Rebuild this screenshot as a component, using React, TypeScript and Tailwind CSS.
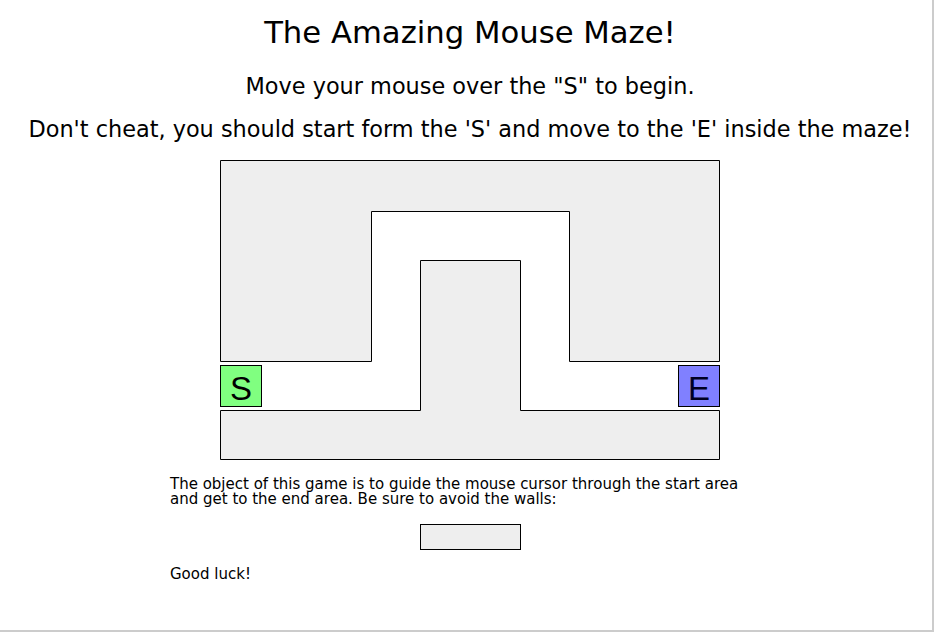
export default function App() {
  return (
    <div className="w-[935px] h-[633px] bg-white overflow-hidden">
      <div className="w-[934px] h-[632px] border-r-2 border-b-2 border-[#cccccc] overflow-hidden">
        <div className="w-[940px] flex flex-col items-center text-black font-['DejaVu_Sans',sans-serif]">
          <h1 className="mt-[13px] text-[30.7px] leading-[40px] font-normal">The Amazing Mouse Maze!</h1>
          <p className="mt-[18px] text-[22.4px] leading-[30px]">Move your mouse over the "S" to begin.</p>
          <p className="mt-[13px] text-[22.4px] leading-[30px]">
            Don't cheat, you should start form the 'S' and move to the 'E' inside the maze!
          </p>

          <div className="relative mt-[16px] w-[500px] h-[300px]">
            <svg width="500" height="300" viewBox="0 0 500 300" className="block">
              <polygon
                points="0.5,0.5 499.5,0.5 499.5,201.5 349.5,201.5 349.5,51.5 151.5,51.5 151.5,201.5 0.5,201.5"
                fill="#eeeeee"
                stroke="#000"
                strokeWidth="1"
              />
              <polygon
                points="0.5,250.5 200.5,250.5 200.5,100.5 300.5,100.5 300.5,250.5 499.5,250.5 499.5,299.5 0.5,299.5"
                fill="#eeeeee"
                stroke="#000"
                strokeWidth="1"
              />
            </svg>
            <div className="absolute left-0 top-[205px] w-[42px] h-[42px] bg-[#80ff80] border border-black flex items-center justify-center pt-[4px] text-[33px] leading-none font-['Liberation_Sans',sans-serif]">
              S
            </div>
            <div className="absolute left-[458px] top-[205px] w-[42px] h-[42px] bg-[#8080ff] border border-black flex items-center justify-center pt-[4px] text-[33px] leading-none text-[#000022] font-['Liberation_Sans',sans-serif]">
              E
            </div>
          </div>

          <div className="mt-[17px] w-[600px] text-[15px] leading-[15px]">
            <p>
              The object of this game is to guide the mouse cursor through the start area and get to the end area.
              Be sure to avoid the walls:
            </p>
            <div className="mt-[17px] mx-auto w-[101px] h-[26px] bg-[#eeeeee] border border-black" />
            <p className="mt-[17px]">Good luck!</p>
          </div>
        </div>
      </div>
    </div>
  );
}
